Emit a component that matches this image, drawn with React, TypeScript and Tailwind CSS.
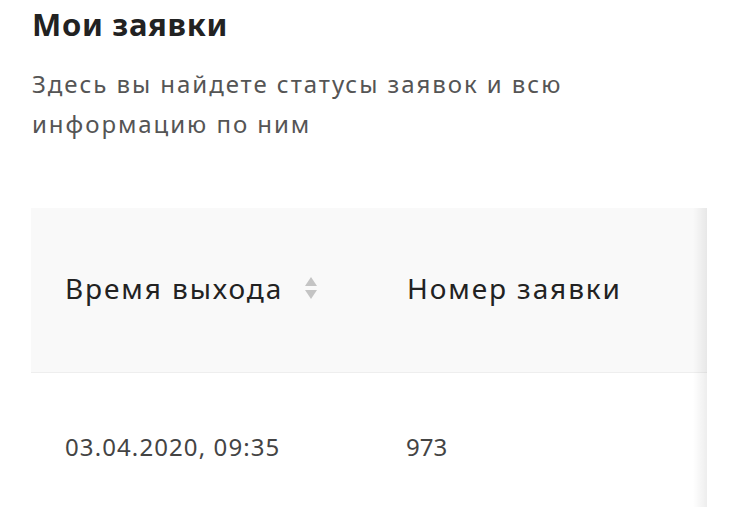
function SortIcon() {
  return (
    <svg width="14" height="24" viewBox="0 0 14 24" className="ml-[21px] shrink-0">
      <path d="M7 1 L13 10 L1 10 Z" fill="#c4c4c4" />
      <path d="M1 14 L13 14 L7 23 Z" fill="#c4c4c4" />
    </svg>
  )
}

export default function App() {
  return (
    <div className="min-h-[507px] bg-white pl-8 pt-[6px] text-[#222]" style={{ fontFamily: '"Noto Sans", "Open Sans", sans-serif' }}>
      <h1 className="text-[31px] font-bold leading-[36px] tracking-[0.7px]">Мои заявки</h1>
      <p className="mt-[22px] w-[580px] text-[24px] leading-[40px] tracking-[1.95px] text-[#555]">
        Здесь вы найдете статусы заявок и всю информацию по ним
      </p>

      <div className="relative mt-[64px] w-[676px] -ml-px">
        <div className="flex h-[165px] items-center border-b border-[#eeeeee] bg-[#f9f9f9] pb-[4px] text-[28px] tracking-[1.9px] text-[#222]">
          <div className="flex w-[342px] items-center pl-[34px]">
            <span>Время выхода</span>
            <SortIcon />
          </div>
          <div className="pl-[34px]">Номер заявки</div>
        </div>
        <div className="flex h-[150px] items-center pb-[2px] text-[24px] text-[#444]">
          <div className="w-[342px] pl-[34px] tracking-[1.1px]">03.04.2020, 09:35</div>
          <div className="pl-[33px]">973</div>
        </div>
        <div className="pointer-events-none absolute right-0 top-0 h-full w-[14px] bg-gradient-to-r from-transparent to-black/[0.07]" />
      </div>
    </div>
  )
}
